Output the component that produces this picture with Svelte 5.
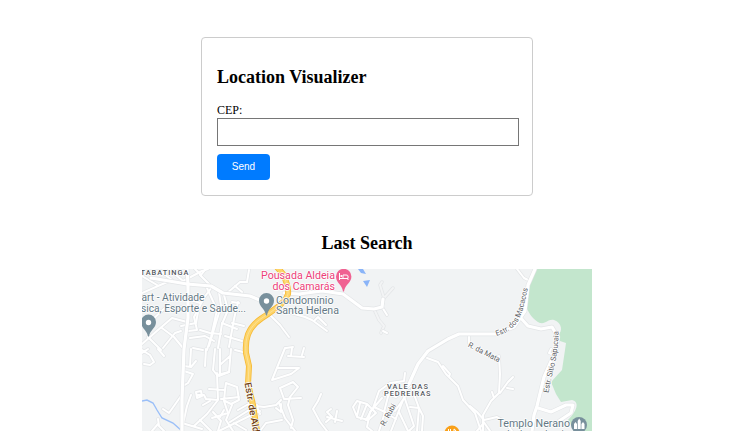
<script>
  let cep = $state('');

  const minor = [
    'M142 293L158 286L172 280L160 271M169 269L183 281L202 271L208 269',
    'M142 276L157 285M195 269L201 275L205 270M200 275L212 287L200 303L191 300M204 298L194 317L197 330L188 331',
    'M151 321L166 307L181 307M142 344L158 330L172 318L187 322M148 337L161 350M162 328L174 337L183 348',
    'M163 348L175 333L181 331M207 288L217 310L211 337L207 350M219 292L221 306L209 346M224 295L228 310L222 324L218 348',
    'M226 294L240 282L247 282L249 270M235 286L242 292M238 302L234 319L229 347M239 303L232 302M232 323L244 326M225 336L242 341M222 323L237 329',
    'M198 312L196 323L181 326M190 338L205 336L214 341M193 348L203 350M200 330L210 333L221 334',
    'M142 350L150 355L154 362L150 365L144 364M158 349L164 356M142 353L148 349',
    'M191 349L190 366M184 366L191 367L196 361M184 371L193 374L188 383L183 386M206 349L205 366M215 349L213 370L217 375L229 372L231 349M220 349L220 374M221 364L230 356',
    'M217 373L218 400L207 414L194 426M229 372L219 376M209 389L225 390L226 383L237 387L239 400L231 404L225 401M225 390L224 401L228 413L212 418M221 399L239 397M198 395L204 395L206 399L218 400M196 392L201 391L202 396L197 398L196 392',
    'M163 409L169 413L181 396M191 395L187 406L183 424M158 419L159 426L164 431M152 431L158 424M182 423L202 429M200 420L211 431M213 412L221 421L218 431M203 405L210 401',
    'M232 405L226 420L233 431M220 417L224 410M238 410L254 401M230 422L257 405M219 431L260 411M234 423L246 430M243 352L235 350',
    'M268 313L280 325L289 337M293 347L286 348M284 311L305 317L312 320L327 331M315 320L318 317L326 325M310 302L313 312',
    'M285 348L272 380L291 374L299 368M278 368L299 368M288 356L304 357M292 348L291 356M304 348L302 355',
    'M301 398L284 399L280 388L293 382L298 387L290 397L288 405L293 420L291 428M281 400L276 405L264 407L249 405M257 407L260 414M282 420L266 423L260 431M279 403L285 418L295 431M276 408L281 412L281 404',
    'M321 394L318 401L313 409L320 422L327 431M326 422L332 417L327 412L331 409M327 417L342 421M337 411L335 422',
    'M353 407L357 401L367 404L376 413L368 420L357 417L353 407M360 403L357 416M367 404L361 419M372 409L366 420',
    'M373 408L379 391L390 383L404 381L405 373M382 398L370 412L367 427L372 431M374 407L385 412L379 431M384 393L396 397L411 386M391 385L384 412L396 419M407 390L391 431M404 396L414 426L409 431M412 389L419 408L417 431M399 412L408 431M410 407L419 408L423 416L422 431M395 411L407 394',
    'M427 358L438 362L446 374L458 386L463 400L475 413L481 431M443 366L450 374L449 377',
    'M469 334L469 343M499 356L500 374L499 393L491 401L483 415L483 431M500 393L508 382L513 377M507 388L513 389M494 398L492 392M470 406L477 412L484 420L497 417L504 421L512 431M483 421L490 431M477 431L482 425',
    'M517 269L524 278L528 280M556 350L554 355L549 353L551 349',
    'M387 333L383 331M382 307L387 315'
  ];
  // Outlined tracks drawn in the land colour
  const tracks = [
    'M382 282L380 285L384 298L382 306M384 298L393 288M374 309L379 320L384 326L381 333'
  ];
  const streets = [
    'M187 269L188 284L188 318L184 349L182 399L182 431',
    'M187 284L211 286L223 293L250 296L262 301M151 278L187 284',
    'M284 293L299 294L322 291L343 294L362 308L374 309L382 307L383 299',
    'M402 393L409 384L418 364L428 351L448 339L459 334L498 334L514 327L525 311L528 285L535 269',
    'M519 316L528 326L541 329L552 327L558 337L556 350L544 377L537 406L534 415L532 431M538 408L551 412L566 405L573 405L571 413L559 421'
  ];
</script>

<main>
  <form class="card" onsubmit={(e) => e.preventDefault()}>
    <h2>Location Visualizer</h2>
    <label for="cep">CEP:</label>
    <input id="cep" type="text" bind:value={cep} />
    <button type="submit">Send</button>
  </form>

  <section class="result">
    <h2>Last Search</h2>
    <svg class="map" viewBox="142 269 450 162" role="img" aria-label="Map">
      <rect x="142" y="269" width="450" height="162" fill="#f1f3f4" />
      <path fill="#c3e6cd" d="M536 269L529 280L526 307C529 313 533 320 540 323C547 324 547 319 554 320C562 323 563 331 558 335L560 341L566 343L565 350L562 370L551 382L556 394L561 402L572 400C580 402 577 411 568 420L574 431H592V269Z" />
      <g class="water">
        <path d="M142 401L147 400L153 403L157 410L162 418L173 423L182 431" />
      </g>
      <path fill="#8ab4f8" d="M358 269L361 273L366 274L363 269ZM363 281L370 280L367 287Z" />

      <g class="road">
        {#each tracks as d}<path class="edge" {d} /><path class="track" {d} />{/each}
        {#each minor as d}<path class="edge" {d} />{/each}
        {#each minor as d}<path class="lane" {d} />{/each}
        {#each streets as d}<path class="edge wide" {d} />{/each}
        {#each streets as d}<path class="lane wide" {d} />{/each}
        <path class="highway-edge" d="M276 266L283 274Q289 287 288 294C285 304 272 311 262 318C247 328 245 340 246 353L249 366L248 384L253 405L257 431" />
        <path class="highway" d="M276 266L283 274Q289 287 288 294C285 304 272 311 262 318C247 328 245 340 246 353L249 366L248 384L253 405L257 431" />
        <path class="highway-mid" d="M282 272Q289 287 288 294C285 304 272 311 262 318C247 328 245 340 246 353L249 366L248 384" />
      </g>

      <g class="place">
        <text x="140.500" y="275.300" class="district" textLength="48">TABATINGA</text>
        <text x="141.500" y="301.300" textLength="63" lengthAdjust="spacingAndGlyphs">art - Atividade</text>
        <text x="141" y="311.800" textLength="105" lengthAdjust="spacingAndGlyphs">sica, Esporte e Saúde...</text>
        <text x="276" y="303.500" textLength="57.500" lengthAdjust="spacingAndGlyphs">Condomínio</text>
        <text x="276" y="314" textLength="63" lengthAdjust="spacingAndGlyphs">Santa Helena</text>
        <text x="497.500" y="426.500" textLength="72.500" lengthAdjust="spacingAndGlyphs">Templo Nerano</text>
        <text x="504" y="437.500" textLength="65" lengthAdjust="spacingAndGlyphs">de Jesus Igreja</text>
        <g class="pink">
          <text x="261" y="279" textLength="74" lengthAdjust="spacingAndGlyphs">Pousada Aldeia</text>
          <text x="272.500" y="289.500" textLength="62.500" lengthAdjust="spacingAndGlyphs">dos Camarás</text>
        </g>
        <text x="387" y="388.700" class="district" textLength="41">VALE DAS</text>
        <text x="384" y="396.300" class="district" textLength="46.500">PEDREIRAS</text>
      </g>

      <g class="street-name">
        <text transform="translate(384.500 426.500) rotate(-61)" textLength="24" lengthAdjust="spacingAndGlyphs">R. Rubi</text>
        <text transform="translate(467.500 346.500) rotate(27)" textLength="35" lengthAdjust="spacingAndGlyphs">R. da Mata</text>
        <path id="macacos" d="M496.500 336C514 331 520 320 523 309L530 280" fill="none" />
        <text><textPath href="#macacos" textLength="61">Estr. dos Macacos</textPath></text>
        <path id="sapucaia" d="M548.500 393C552 373 559 355 558.500 329" fill="none" />
        <text><textPath href="#sapucaia" textLength="63">Estr. Sítio Sapucaia</textPath></text>
        <text class="highway-name" transform="translate(244.500 383) rotate(80)" textLength="64" lengthAdjust="spacingAndGlyphs">Estr. de Aldeia</text>
      </g>

      <g fill="#78909c">
        <path d="M266 315.500C265 308 259 307 259 300.500A7.500 7.500 0 0 1 274 300.500C274 307 268 308 267 315.500Z" />
        <circle cx="266.500" cy="301" r="2.700" fill="#fff" />
        <path d="M148 336.500C147 330 141 328 141 322A7.500 7.500 0 0 1 156 322C156 328 150 330 149 336.500Z" />
        <circle cx="148.500" cy="322.500" r="2.700" fill="#fff" />
        <circle cx="579" cy="425" r="8" />
        <path d="M574 429V424L575.500 422L577 424V429ZM577.700 429V421L579.200 418.500L580.700 421V429ZM581.400 429V424L583 422L584.500 424V429Z" fill="#fff" />
      </g>
      <path fill="#f06292" d="M343 291.500C342 284 336 283 336 276.500A7.700 7.700 0 0 1 351.400 276.500C351.400 283 345 284 344 291.500Z" />
      <path d="M339.500 273V280M339.500 278.500H348V280M348 278V276Q348 275 346 275H343V278" fill="none" stroke="#fff" stroke-width="1" />
      <circle cx="341.300" cy="276" r="1" fill="#fff" />
      <circle cx="452" cy="433" r="7.500" fill="#f9a019" />
      <path d="M448.500 429V433M450.500 429V433M448.500 432H450.500M454 433V429Q456 429 456 433" fill="none" stroke="#fff" />
    </svg>
  </section>
</main>

<style>
  :global(body) {
    margin: 0;
    background: #fff;
  }
  main {
    display: flex;
    flex-direction: column;
    align-items: center;
    box-sizing: border-box;
    width: 738px;
    height: 431px;
    padding: 37px 4px 0 0;
    overflow: hidden;
    font-family: 'Liberation Serif', 'Times New Roman', serif;
    font-size: 12px;
    color: #000;
  }
  .card {
    display: flex;
    flex-direction: column;
    align-items: flex-start;
    box-sizing: border-box;
    flex: none;
    width: 332px;
    height: 159px;
    padding: 29px 15px 15px;
    border: 1px solid #ccc;
    border-radius: 4px;
  }
  h2 {
    margin: 0;
    font-size: 18px;
    line-height: 20px;
    font-weight: bold;
  }
  label {
    margin-top: 16px;
    line-height: 15px;
  }
  input {
    box-sizing: border-box;
    flex: none;
    width: 302px;
    height: 28px;
    margin: 0;
    padding: 6px;
    border: 1px solid #767676;
    border-radius: 0;
    background: #fff;
    outline: none;
  }
  button {
    width: 53px;
    height: 26px;
    margin: 8px 0 0;
    padding: 0 0 1px;
    border: 0;
    border-radius: 4px;
    background: #007bff;
    color: #fff;
    font: 10px 'Liberation Sans', Arial, sans-serif;
  }
  .result {
    display: flex;
    flex-direction: column;
    align-items: center;
    flex: none;
    margin-top: 37px;
  }
  .map {
    display: block;
    width: 450px;
    height: 162px;
    margin-top: 16px;
    font-family: Roboto, sans-serif;
  }
  .water path {
    fill: none;
    stroke: #9abff8;
    stroke-width: 1.4;
  }
  .road path {
    fill: none;
    stroke-linejoin: round;
    stroke-linecap: round;
  }
  .road .edge {
    stroke: #e3e5e7;
    stroke-width: 3.4;
  }
  .road .lane {
    stroke: #fff;
    stroke-width: 2;
  }
  .road .track {
    stroke: #f3f4f5;
    stroke-width: 2;
  }
  .road .edge.wide {
    stroke-width: 4.4;
  }
  .road .lane.wide {
    stroke-width: 3.2;
  }
  .road .highway-edge {
    stroke: #f6b935;
    stroke-width: 6;
  }
  .road .highway {
    stroke: #fdd469;
    stroke-width: 4.4;
  }
  .road .highway-mid {
    stroke: #fbe3a0;
    stroke-width: 0.8;
  }
  text {
    paint-order: stroke;
    stroke: #fff;
    stroke-width: 1.5px;
    stroke-linejoin: round;
  }
  .place text {
    fill: #647985;
    font-size: 11px;
  }
  .place .pink text {
    fill: #ec407a;
  }
  .place .district {
    fill: #55595e;
    font-size: 7.4px;
    font-weight: 500;
  }
  .street-name text {
    fill: #5c6064;
    font-size: 7.6px;
  }
  .street-name .highway-name {
    fill: #713f12;
    font-size: 9.5px;
    font-weight: 500;
  }
</style>
